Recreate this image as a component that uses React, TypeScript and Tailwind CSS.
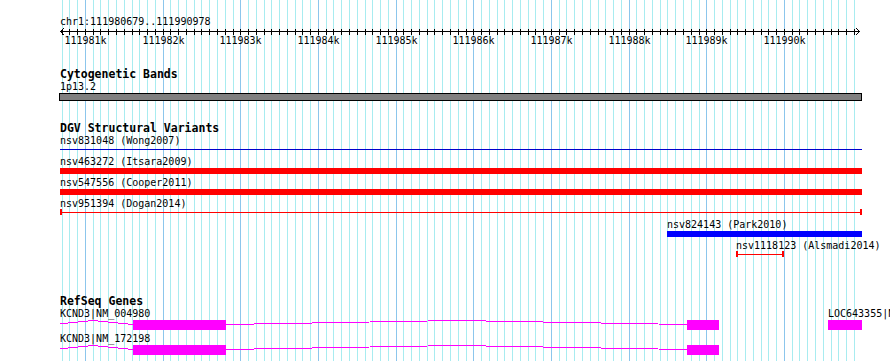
import React from "react";

// view window
const START = 111980679;
const SPAN = 10300;
const W = 800;
const px = (p: number) => ((p - START) * W) / SPAN;

const steps: number[] = [];
for (let p = 111980700; p <= 111990978; p += 100) steps.push(p);
const majors = steps.filter((p) => p % 1000 === 0);

function Grid() {
  return (
    <svg className="absolute left-[60px] top-0" width={802} height={361} shapeRendering="crispEdges">
      {steps.map((p) => {
        const x = Math.round(px(p)) + 0.5;
        return (
          <line key={p} x1={x} x2={x} y1={0} y2={361} stroke={p % 1000 === 0 ? "#8cc6ec" : "#a8ecf0"} />
        );
      })}
    </svg>
  );
}

function Ruler() {
  return (
    <div className="relative h-[19px]">
      <svg className="block" width={802} height={8} shapeRendering="crispEdges">
        <line x1={0} x2={800} y1={3.5} y2={3.5} stroke="#000" />
        {steps.map((p) => {
          const x = Math.round(px(p)) + 0.5;
          return <line key={p} x1={x} x2={x} y1={1} y2={7} stroke="#000" />;
        })}
        <polyline points="4,0 0.5,3.5 4,7" fill="none" stroke="#000" />
        <polyline points="796,0 799.5,3.5 796,7" fill="none" stroke="#000" />
      </svg>
      {majors.map((p) => (
        <span
          key={p}
          className="absolute top-[7px] -translate-x-1/2 whitespace-nowrap text-[10px] leading-[12px]"
          style={{ left: Math.round(px(p)) + 0.5 }}
        >
          {p / 1000}k
        </span>
      ))}
    </div>
  );
}

function Title({ children, className = "" }: { children: React.ReactNode; className?: string }) {
  return <div className={`text-[11.5px] font-bold leading-[13px] ${className}`}>{children}</div>;
}

type Variant = {
  label: string;
  x0: number;
  x1: number;
  kind: "line" | "bar" | "capped";
  color: string;
};

const variants: Variant[] = [
  { label: "nsv831048 (Wong2007)", x0: 0, x1: 802, kind: "line", color: "bg-[#0000cc]" },
  { label: "nsv463272 (Itsara2009)", x0: 0, x1: 802, kind: "bar", color: "bg-[#ff0000]" },
  { label: "nsv547556 (Cooper2011)", x0: 0, x1: 802, kind: "bar", color: "bg-[#ff0000]" },
  { label: "nsv951394 (Dogan2014)", x0: 0, x1: 802, kind: "capped", color: "bg-[#ff0000]" },
  { label: "nsv824143 (Park2010)", x0: 607, x1: 802, kind: "bar", color: "bg-[#0000ff]" },
  { label: "nsv1118123 (Alsmadi2014)", x0: 676, x1: 724, kind: "capped", color: "bg-[#ff0000]" },
];

function VariantRow({ v }: { v: Variant }) {
  return (
    <div className="relative h-[21px]">
      <span className="absolute top-0 whitespace-nowrap text-[10px] leading-[12px]" style={{ left: v.x0 }}>
        {v.label}
      </span>
      {v.kind === "bar" && (
        <div className={`absolute top-[12px] h-[6px] ${v.color}`} style={{ left: v.x0, width: v.x1 - v.x0 }} />
      )}
      {v.kind !== "bar" && (
        <div className={`absolute top-[14px] h-px ${v.color}`} style={{ left: v.x0, width: v.x1 - v.x0 }} />
      )}
      {v.kind === "capped" && (
        <>
          <div className={`absolute top-[11px] h-[6px] w-[2px] ${v.color}`} style={{ left: v.x0 }} />
          <div className={`absolute top-[11px] h-[6px] w-[2px] ${v.color}`} style={{ left: v.x1 - 2 }} />
        </>
      )}
    </div>
  );
}

const exons = [
  [73, 166],
  [627, 659],
];

function GeneRow({ label, extra }: { label: string; extra?: boolean }) {
  return (
    <div className="relative h-[25px]">
      <span className="absolute left-0 top-0 whitespace-nowrap text-[10px] leading-[12px]">{label}</span>
      {extra && (
        <span className="absolute left-[768px] top-0 whitespace-nowrap text-[10px] leading-[12px]">
          LOC643355|NR_027134
        </span>
      )}
      <svg className="absolute left-0 top-[12px]" width={802} height={10} shapeRendering="crispEdges">
        <polyline points="-7,4.5 33,0.5 73,4.5" fill="none" stroke="#ff00ff" />
        <polyline points="166,4.5 396.5,0.5 627,4.5" fill="none" stroke="#ff00ff" />
        {exons.map(([a, b]) => (
          <rect key={a} x={a} y={0} width={b - a} height={10} fill="#ff00ff" />
        ))}
        {extra && <rect x={768} y={0} width={34} height={10} fill="#ff00ff" />}
      </svg>
    </div>
  );
}

export default function App() {
  return (
    <div className="relative h-[361px] w-[890px] overflow-hidden bg-white font-['DejaVu_Sans_Mono',monospace] text-black">
      <Grid />
      <div className="relative ml-[60px] flex w-[802px] flex-col">
        <div className="mt-[16px] text-[10px] leading-[12px]">chr1:111980679..111990978</div>
        <Ruler />

        <Title className="mt-[21px]">Cytogenetic Bands</Title>
        <div className="text-[10px] leading-[12px]">1p13.2</div>
        <div className="-ml-px h-[8px] w-[803px] border border-black bg-[#808080]" />

        <Title className="mt-[21px]">DGV Structural Variants</Title>
        {variants.map((v) => (
          <VariantRow key={v.label} v={v} />
        ))}

        <Title className="mt-[34px]">RefSeq Genes</Title>
        <GeneRow label="KCND3|NM_004980" extra />
        <GeneRow label="KCND3|NM_172198" />
      </div>
    </div>
  );
}
